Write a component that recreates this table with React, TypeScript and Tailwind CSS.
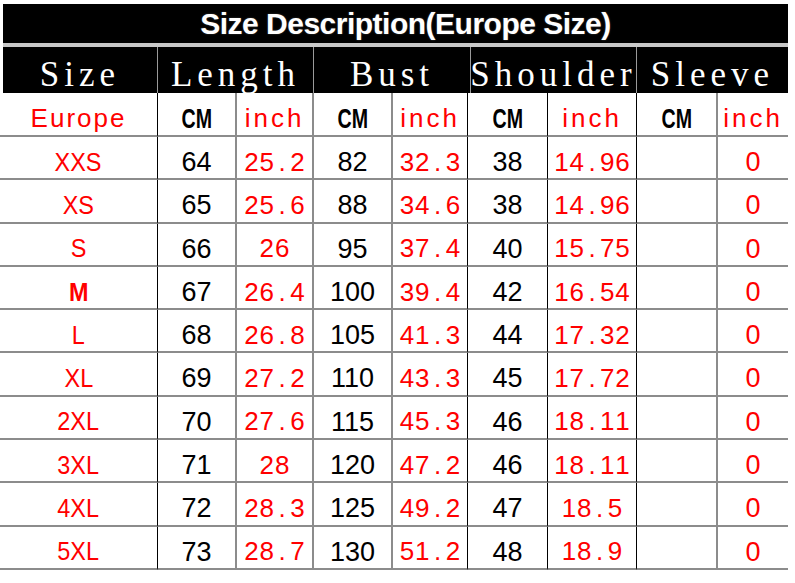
import React from 'react';

const rows: string[][] = [
  ['XXS', '64', '25.2', '82', '32.3', '38', '14.96', '', '0'],
  ['XS', '65', '25.6', '88', '34.6', '38', '14.96', '', '0'],
  ['S', '66', '26', '95', '37.4', '40', '15.75', '', '0'],
  ['M', '67', '26.4', '100', '39.4', '42', '16.54', '', '0'],
  ['L', '68', '26.8', '105', '41.3', '44', '17.32', '', '0'],
  ['XL', '69', '27.2', '110', '43.3', '45', '17.72', '', '0'],
  ['2XL', '70', '27.6', '115', '45.3', '46', '18.11', '', '0'],
  ['3XL', '71', '28', '120', '47.2', '46', '18.11', '', '0'],
  ['4XL', '72', '28.3', '125', '49.2', '47', '18.5', '', '0'],
  ['5XL', '73', '28.7', '130', '51.2', '48', '18.9', '', '0'],
];

// right border per column
const colBorder = [
  'border-r border-r-black',
  'border-r-2 border-r-[#8c8c8c]',
  'border-r-2 border-r-[#8c8c8c]',
  'border-r-2 border-r-[#8c8c8c]',
  'border-r border-r-black',
  'border-r border-r-black',
  'border-r border-r-black',
  'border-r-2 border-r-[#8c8c8c]',
  '',
];

const sans = "font-['Liberation_Sans',Arial,sans-serif]";
const redText = `${sans} text-[#ff0000] text-[26px]`;

// numbers: half-width cells, so the dot takes a full digit slot
const Mono: React.FC<{ text: string }> = ({ text }) => (
  <span className={`inline-flex ${redText}`}>
    {[...text].map((ch, i) => (
      <span key={i} className="inline-block w-[15.3px] text-center">
        {ch}
      </span>
    ))}
  </span>
);

const Cell: React.FC<{ col: number; children: React.ReactNode; extra?: string }> = ({ col, children, extra }) => (
  <div className={`flex items-center justify-center pt-[9px] border-b-2 border-b-[#8c8c8c] ${colBorder[col]} ${extra ?? ''}`}>
    {children}
  </div>
);

const headers = [
  { label: 'Size', w: 'w-[155px]' },
  { label: 'Length', w: 'w-[156px]' },
  { label: 'Bust', w: 'w-[157px]' },
  { label: 'Shoulder', w: 'w-[166px]' },
  { label: 'Sleeve', w: 'w-[151px]' },
];

const sizeClass = (s: string) => {
  if (s === 'L' || s === 'XL') return 'text-[21px]';
  if (s === 'M') return 'font-bold';
  return '';
};

export default function App() {
  return (
    <div className="w-[795px] h-[583px] bg-white overflow-hidden pt-[4px]">
      <div className="w-[788px]">
        <div className="ml-[3px] h-[39px] bg-black flex items-center justify-center pl-5">
          <span className={`text-white ${sans} font-bold text-[30px] tracking-[-0.5px] [text-shadow:0_0_2px_#444]`}>
            Size Description(Europe Size)
          </span>
        </div>
        <div className="ml-[3px] h-[4px] bg-[#c8c8c8]" />
        <div className="ml-[3px] h-[46px] bg-black flex">
          {headers.map((h, i) => (
            <div
              key={h.label}
              className={`${h.w} flex items-center justify-center pt-2 ${i < headers.length - 1 ? 'border-r border-r-[#9a9a9a]' : ''}`}
            >
              <span className="text-white font-['Liberation_Serif','Times_New_Roman',serif] text-[35px] tracking-[5px] leading-none">
                {h.label}
              </span>
            </div>
          ))}
        </div>
        <div className="grid grid-cols-[158px_79px_77px_79px_75px_80px_89px_81px_70px]">
          <Cell col={0} extra="h-[44px]">
            <span className={`${redText} tracking-[2px]`}>Europe</span>
          </Cell>
          {[1, 2, 3, 4, 5, 6, 7, 8].map((c) =>
            c % 2 === 1 ? (
              <Cell key={c} col={c} extra="h-[44px]">
                <span className={`inline-block scale-x-[0.7] text-black ${sans} font-bold text-[28px]`}>CM</span>
              </Cell>
            ) : (
              <Cell key={c} col={c} extra="h-[44px]">
                <span className={`${redText} tracking-[3px]`}>inch</span>
              </Cell>
            )
          )}
          {rows.map((r) =>
            r.map((v, c) => (
              <Cell key={r[0] + c} col={c} extra="h-[43.3px]">
                {c === 0 ? (
                  <span className={`inline-block scale-x-90 ${redText} ${sizeClass(v)}`}>{v}</span>
                ) : c % 2 === 1 ? (
                  <span className={`text-black ${sans} text-[27px]`}>{v}</span>
                ) : c === 8 ? (
                  <span className={`text-[#ff0000] ${sans} text-[27px]`}>{v}</span>
                ) : (
                  <Mono text={v} />
                )}
              </Cell>
            ))
          )}
        </div>
      </div>
    </div>
  );
}
